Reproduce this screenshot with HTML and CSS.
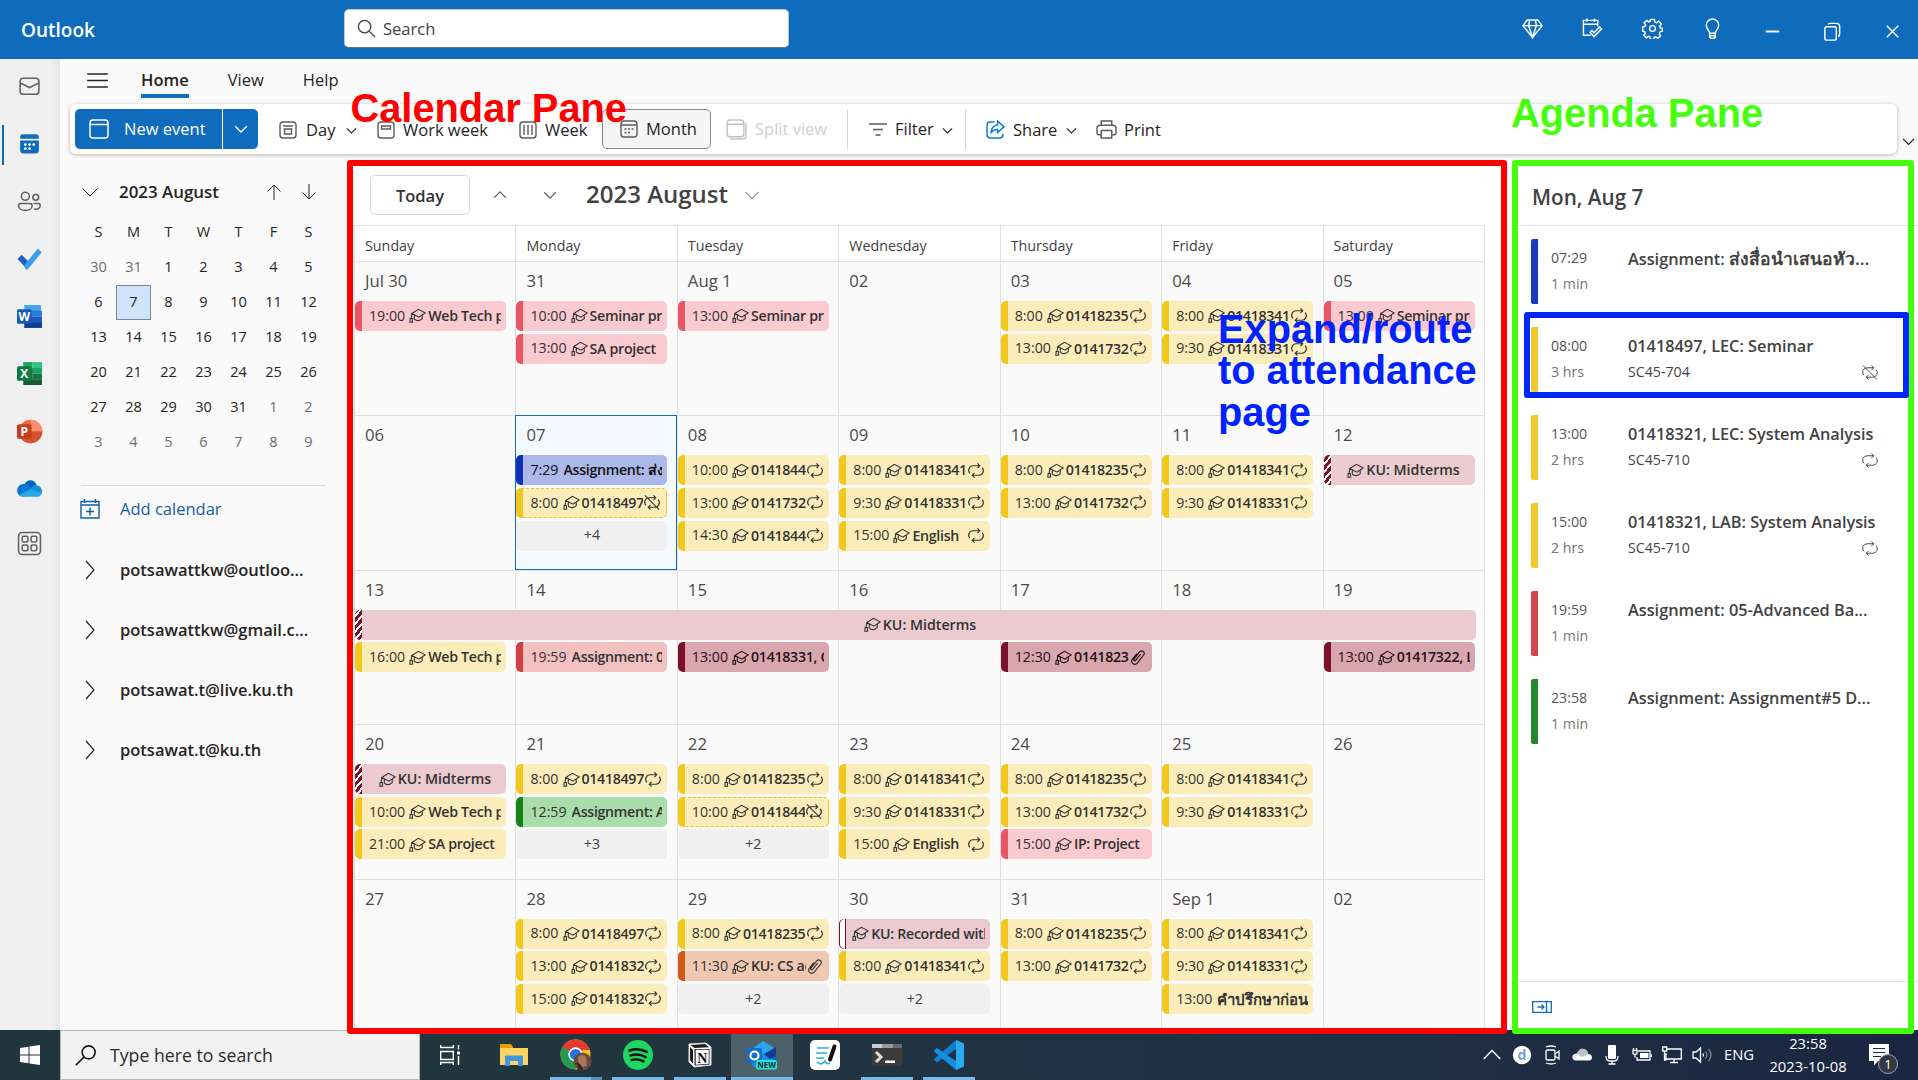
FILE: index.html
```html
<!DOCTYPE html>
<html lang="en">
<head>
<meta charset="utf-8">
<title>Outlook - Calendar</title>
<link rel="stylesheet" href="styles.css">
</head>
<body>
<svg class="defs" aria-hidden="true">
  <symbol id="cap" viewBox="0 0 18 18"><path d="M3 6.800 10 2.500l7 3.700-6.500 4.600zM5.600 8.500v4.300c2.400 2.400 6 2 8.400-.6V8.500M3 6.800l-.8 5.400M1.200 12.200h2.300l.3 4H.9z"/></symbol>
  <symbol id="rep" viewBox="0 0 18 18"><path d="M10.500 1.500 13 4l-2.500 2.500M13 4H6a4.700 4.700 0 0 0-3.400 8M7.500 16.500 5 14l2.500-2.500M5 14h7a4.700 4.700 0 0 0 3.400-8"/></symbol>
  <symbol id="norep" viewBox="0 0 18 18"><path d="M10.500 1.500 13 4l-2.500 2.500M13 4H6a4.700 4.700 0 0 0-3.400 8M7.500 16.500 5 14l2.500-2.500M5 14h7a4.700 4.700 0 0 0 3.400-8M1.500 1.500l15 15"/></symbol>
  <symbol id="clip" viewBox="0 0 18 18"><path d="M11.800 5.500 6.500 12c-1 1.200-2.700 0-1.800-1.300l6.300-7.800c2.200-2.200 5.800.5 4.200 3.200l-7 8.800c-3 3.200-7.600-.4-5.200-4L7.800 5"/></symbol>
  <symbol id="down" viewBox="0 0 18 18"><path d="M1.500 5.500 9 13l7.500-7.500"/></symbol>
  <symbol id="up" viewBox="0 0 18 18"><path d="M1.500 12.500 9 5l7.500 7.500"/></symbol>
  <symbol id="right" viewBox="0 0 18 18"><path d="M5 0l8 9-8 9"/></symbol>
</svg>

<header class="titlebar">
  <div class="brand">Outlook</div>
  <div class="searchbox"><svg viewBox="0 0 20 20"><circle cx="8" cy="8" r="6.500"/><path d="M13 13l6 6"/></svg><span>Search</span></div>
  <div class="title-actions">
    <span><svg viewBox="0 0 22 22"><path d="M5.500 2h11L21 8 11 20.500 1 8zM1 8h20M8 2 7 8l4 12.500L15 8l-1-6"/></svg></span>
    <span><svg viewBox="0 0 22 22"><path d="M9 18H1.500V2.500h15V9M1.500 6.500h15M5 .5v3.500M13 .5v3.500M8.500 15l4 4.500 8-8-2-2-6 6-2-2.300z"/></svg></span>
    <span><svg viewBox="0 0 22 22"><circle cx="11" cy="11" r="3"/><path d="M9 1.500h4l.5 2.800 1.700.7 2.400-1.600 2.600 2.800-1.600 2.300.7 1.800 2 .6v3l-2.400.7-.9 1.900 1.500 2.200-2.700 2.500-2.400-1.500-1.600.6-.6 2.200H9l-.6-2.500-1.700-.7-2.200 1.500-2.600-2.700 1.500-2.200-.7-1.700-2-.5V9.500l2.400-.7.700-1.700L2.200 5 5 2.500 7 4l1.500-.6z"/></svg></span>
    <span><svg viewBox="0 0 22 22"><path d="M8 16c0-3-3.500-4.500-3.500-8.500a6.500 6.500 0 0 1 13 0c0 4-3.500 5.500-3.500 8.500zM8 16v4l1.500 1.500h3L14 20v-4M8 18.500h6"/></svg></span>
    <span class="win"><svg viewBox="0 0 22 22"><path d="M4 11h14" stroke-width="2"/></svg></span>
    <span class="win"><svg viewBox="0 0 22 22"><rect x="3" y="6" width="12" height="14" rx="2"/><path d="M6.500 3.500Q7 2.500 8.500 2.500H15q3.500 0 3.500 3.500v7.500q0 2-1.500 3"/></svg></span>
    <span class="win"><svg viewBox="0 0 22 22"><path d="M5 5l12 12M17 5 5 17"/></svg></span>
  </div>
</header>

<div class="app">
  <nav class="rail">
    <span><svg viewBox="0 0 24 24" class="line"><rect x="3" y="4" width="18" height="15.500" rx="3"/><path d="M3 8.500l9 4.500 9-4.500"/></svg></span>
    <span class="active"><svg viewBox="0 0 24 24"><path fill="#0f6cbd" d="M6 3h12a3 3 0 0 1 3 3v1.500H3V6a3 3 0 0 1 3-3zM3 9h18v9.500a3 3 0 0 1-3 3H6a3 3 0 0 1-3-3z"/><g fill="#fff"><circle cx="8" cy="13" r="1.300"/><circle cx="12" cy="13" r="1.300"/><circle cx="16" cy="13" r="1.300"/><circle cx="8" cy="17" r="1.300"/><circle cx="12" cy="17" r="1.300"/></g></svg></span>
    <span><svg viewBox="0 0 24 24" class="line"><circle cx="8" cy="7" r="3.800"/><circle cx="18" cy="8" r="2.800"/><path d="M3.500 14h9q2 0 2 2c0 6-13 6-13 0q0-2 2-2zM16 14h4.500q1.800 0 1.800 1.800c0 3-3 4-6 3.400"/></svg></span>
    <span><svg viewBox="0 0 24 24"><path fill="#1f5fc4" d="M.5 12.500 4.500 8.500l6 6L9.500 22z"/><path fill="#3aa0ee" d="M6.500 19 20 2.500 23.700 6 10.500 22.300q-1 .8-2 0z"/></svg></span>
    <span><svg viewBox="0 0 24 24"><path fill="#41a5ee" d="M7 1h16v6H7z"/><path fill="#2b7cd3" d="M7 6.500h17v5.500H7z"/><path fill="#185abd" d="M7 12h17v6H7z"/><path fill="#103f91" d="M7 17.500h17V23H7z"/><rect y="5" width="14" height="14" rx="1.500" fill="#1857b8"/><text x="7" y="16" class="tile">W</text></svg></span>
    <span><svg viewBox="0 0 24 24"><path fill="#21a366" d="M6 1h9v11H6z"/><path fill="#33c481" d="M15 1h9v6h-9z"/><path fill="#21a366" d="M15 6.500h9V12h-9z"/><path fill="#107c41" d="M15 12h9v5.500h-9zM6 7h9v5H6z"/><path fill="#185c37" d="M6 12h9v5.500h9V23H6z"/><rect y="5" width="14" height="14" rx="1.500" fill="#107c41"/><text x="7" y="16" class="tile">X</text></svg></span>
    <span><svg viewBox="0 0 24 24"><circle cx="13" cy="12" r="11.300" fill="#ed6c47"/><path fill="#ff8f6b" d="M13 .7A11.300 11.300 0 0 1 24.300 12H13z"/><path fill="#d35230" d="M1.700 12h22.600A11.300 11.300 0 0 1 1.700 12z"/><rect y="5" width="14" height="14" rx="1.500" fill="#c43e1c"/><text x="7" y="16" class="tile">P</text></svg></span>
    <span><svg viewBox="0 0 24 24"><path fill="#0364b8" d="M7 8.500C9 2.500 17 2.500 19 9l-6 5z"/><path fill="#0078d4" d="M3 19a6 6 0 0 1 2-11c3-1 6 0 8 2l3 4-9 6z"/><path fill="#1490df" d="M13 13c2-4 5-5 6.500-4 5 1 5.500 7 3 9z"/><path fill="#28a8ea" d="M2 18.500 13 12.500l10.500 4.500q-1 3-4 3H5.500Q3 20 2 18.500z"/></svg></span>
    <span><svg viewBox="0 0 24 24" class="line"><rect x="1.500" y="1.500" width="21" height="21" rx="3.500"/><rect x="5" y="5" width="5.500" height="5.500" rx="1.500"/><rect x="13.500" y="5" width="5.500" height="5.500" rx="1.500"/><rect x="5" y="13.500" width="5.500" height="5.500" rx="1.500"/><rect x="13.500" y="13.500" width="5.500" height="5.500" rx="1.500"/></svg></span>
  </nav>

  <div class="content">
    <div class="tabs">
      <svg class="burger" viewBox="0 0 22 16"><path d="M0 1h22M0 8h22M0 15h22"/></svg>
      <span class="tab current">Home</span><span class="tab">View</span><span class="tab">Help</span>
    </div>

    <div class="ribbon-row">
      <div class="ribbon">
        <div class="new-event">
          <div class="new-main"><svg viewBox="0 0 20 20"><rect x="1" y="1" width="18" height="18" rx="3"/><path d="M1 5.500h18"/></svg><span>New event</span></div>
          <div class="new-more"><svg class="chev"><use href="#down"/></svg></div>
        </div>
        <div class="tool t-day"><svg viewBox="0 0 18 18"><rect x="1" y="1" width="16" height="16" rx="3"/><path d="M4 5h10M5.500 8h7v5h-7z"/></svg><span>Day</span><svg class="chev"><use href="#down"/></svg></div>
        <div class="tool t-work"><svg viewBox="0 0 18 18"><rect x="1" y="1" width="16" height="16" rx="3"/><path d="M4.500 5h9v3h-9z"/></svg><span>Work week</span></div>
        <div class="tool t-week"><svg viewBox="0 0 18 18"><rect x="1" y="1" width="16" height="16" rx="3"/><path d="M5 4v10M9 4v10M13 4v10"/></svg><span>Week</span></div>
        <div class="tool t-month"><svg viewBox="0 0 18 18"><rect x="1" y="1" width="16" height="16" rx="3"/><path d="M1 5h16M4.500 9h2M8 9h2M11.500 9h2M4.500 12.500h2M8 12.500h2"/></svg><span>Month</span></div>
        <div class="tool t-split"><svg viewBox="0 0 20 20"><rect x="1" y="1" width="16" height="16" rx="3"/><path d="M1 5h16M19 4v12q0 3-3 3H4"/></svg><span>Split view</span></div>
        <div class="tool t-filter"><svg viewBox="0 0 18 18"><path d="M0 4h18M4 9.500h10M6.500 15h5"/></svg><span>Filter</span><svg class="chev"><use href="#down"/></svg></div>
        <div class="tool t-share"><svg viewBox="0 0 18 18"><path d="M8 2H4Q1 2 1 5v9q0 3 3 3h9q3 0 3-3v-1M11 1l6 5.500-6 5.500V9C8 9 6 10 4.500 12.500 5 8 7.500 5 11 4.500z"/></svg><span>Share</span><svg class="chev"><use href="#down"/></svg></div>
        <div class="tool t-print"><svg viewBox="0 0 20 18"><path d="M5 5V1h10v4M5 14H3q-2 0-2-2V8q0-3 3-3h12q3 0 3 3v4q0 2-2 2h-2M5 10h10v7H5z"/></svg><span>Print</span></div>
      </div>
      <svg class="chev collapse"><use href="#down"/></svg>
    </div>

    <div class="workspace">
      <aside class="sidebar">
        <div class="mini-head"><svg class="big"><use href="#down"/></svg><b>2023 August</b><svg class="arrow" viewBox="0 0 16 16"><path d="M8 16V1M1.500 7.500 8 1l6.500 6.500"/></svg><svg class="arrow" viewBox="0 0 16 16"><path d="M8 0v15M1.500 8.500 8 15l6.500-6.500"/></svg></div>
        <div class="mini">
          <span>S</span><span>M</span><span>T</span><span>W</span><span>T</span><span>F</span><span>S</span>
          <i>30</i><i>31</i><span>1</span><span>2</span><span>3</span><span>4</span><span>5</span>
          <span>6</span><span class="sel">7</span><span>8</span><span>9</span><span>10</span><span>11</span><span>12</span>
          <span>13</span><span>14</span><span>15</span><span>16</span><span>17</span><span>18</span><span>19</span>
          <span>20</span><span>21</span><span>22</span><span>23</span><span>24</span><span>25</span><span>26</span>
          <span>27</span><span>28</span><span>29</span><span>30</span><span>31</span><i>1</i><i>2</i>
          <i>3</i><i>4</i><i>5</i><i>6</i><i>7</i><i>8</i><i>9</i>
        </div>
        <div class="add"><svg viewBox="0 0 20 20"><path d="M1 2.500h18V19H1zM1 6h18M4.500 0v4M15.500 0v4M10 8.500v8M6 12.500h8"/></svg><span>Add calendar</span></div>
        <div class="account"><svg><use href="#right"/></svg><b>potsawattkw@outloo...</b></div>
        <div class="account"><svg><use href="#right"/></svg><b>potsawattkw@gmail.c...</b></div>
        <div class="account"><svg><use href="#right"/></svg><b>potsawat.t@live.ku.th</b></div>
        <div class="account"><svg><use href="#right"/></svg><b>potsawat.t@ku.th</b></div>
      </aside>

      <main class="calendar">
        <div class="cal-head"><button>Today</button><svg class="step"><use href="#up"/></svg><svg class="step"><use href="#down"/></svg><h1>2023 August</h1><svg class="pick"><use href="#down"/></svg></div>
        <div class="weekdays"><span>Sunday</span><span>Monday</span><span>Tuesday</span><span>Wednesday</span><span>Thursday</span><span>Friday</span><span>Saturday</span></div>
        <div class="month">
          <div class="day"><p>Jul 30</p>
            <div class="ev pink"><time>19:00</time><svg><use href="#cap"/></svg><b>Web Tech project</b></div></div>
          <div class="day"><p>31</p>
            <div class="ev pink"><time>10:00</time><svg><use href="#cap"/></svg><b>Seminar project</b></div>
            <div class="ev pink"><time>13:00</time><svg><use href="#cap"/></svg><b>SA project</b></div></div>
          <div class="day"><p>Aug 1</p>
            <div class="ev pink"><time>13:00</time><svg><use href="#cap"/></svg><b>Seminar project</b></div></div>
          <div class="day"><p>02</p></div>
          <div class="day"><p>03</p>
            <div class="ev"><time>8:00</time><svg><use href="#cap"/></svg><b>01418235</b><svg class="end"><use href="#rep"/></svg></div>
            <div class="ev"><time>13:00</time><svg><use href="#cap"/></svg><b>0141732</b><svg class="end"><use href="#rep"/></svg></div></div>
          <div class="day"><p>04</p>
            <div class="ev"><time>8:00</time><svg><use href="#cap"/></svg><b>01418341</b><svg class="end"><use href="#rep"/></svg></div>
            <div class="ev"><time>9:30</time><svg><use href="#cap"/></svg><b>01418331</b><svg class="end"><use href="#rep"/></svg></div></div>
          <div class="day"><p>05</p>
            <div class="ev pink"><time>13:00</time><svg><use href="#cap"/></svg><b>Seminar project</b></div></div>

          <div class="day"><p>06</p></div>
          <div class="day today"><p>07</p>
            <div class="ev blue"><time>7:29</time><b>Assignment: ส่งสื่อ</b></div>
            <div class="ev dashed"><time>8:00</time><svg><use href="#cap"/></svg><b>01418497</b><svg class="end"><use href="#norep"/></svg></div>
            <div class="more">+4</div></div>
          <div class="day"><p>08</p>
            <div class="ev"><time>10:00</time><svg><use href="#cap"/></svg><b>0141844</b><svg class="end"><use href="#rep"/></svg></div>
            <div class="ev"><time>13:00</time><svg><use href="#cap"/></svg><b>0141732</b><svg class="end"><use href="#rep"/></svg></div>
            <div class="ev"><time>14:30</time><svg><use href="#cap"/></svg><b>0141844</b><svg class="end"><use href="#rep"/></svg></div></div>
          <div class="day"><p>09</p>
            <div class="ev"><time>8:00</time><svg><use href="#cap"/></svg><b>01418341</b><svg class="end"><use href="#rep"/></svg></div>
            <div class="ev"><time>9:30</time><svg><use href="#cap"/></svg><b>01418331</b><svg class="end"><use href="#rep"/></svg></div>
            <div class="ev"><time>15:00</time><svg><use href="#cap"/></svg><b>English</b><svg class="end"><use href="#rep"/></svg></div></div>
          <div class="day"><p>10</p>
            <div class="ev"><time>8:00</time><svg><use href="#cap"/></svg><b>01418235</b><svg class="end"><use href="#rep"/></svg></div>
            <div class="ev"><time>13:00</time><svg><use href="#cap"/></svg><b>0141732</b><svg class="end"><use href="#rep"/></svg></div></div>
          <div class="day"><p>11</p>
            <div class="ev"><time>8:00</time><svg><use href="#cap"/></svg><b>01418341</b><svg class="end"><use href="#rep"/></svg></div>
            <div class="ev"><time>9:30</time><svg><use href="#cap"/></svg><b>01418331</b><svg class="end"><use href="#rep"/></svg></div></div>
          <div class="day"><p>12</p>
            <div class="ev allday"><svg><use href="#cap"/></svg><b>KU: Midterms</b></div></div>

          <div class="day"><p>13</p>
            <div class="ev allday wide"><svg><use href="#cap"/></svg><b>KU: Midterms</b></div>
            <div class="ev"><time>16:00</time><svg><use href="#cap"/></svg><b>Web Tech project</b></div></div>
          <div class="day under"><p>14</p>
            <div class="ev red"><time>19:59</time><b>Assignment: 05</b></div></div>
          <div class="day under"><p>15</p>
            <div class="ev wine"><time>13:00</time><svg><use href="#cap"/></svg><b>01418331, Comp</b></div></div>
          <div class="day under"><p>16</p></div>
          <div class="day under"><p>17</p>
            <div class="ev wine"><time>12:30</time><svg><use href="#cap"/></svg><b>0141823</b><svg class="end"><use href="#clip"/></svg></div></div>
          <div class="day under"><p>18</p></div>
          <div class="day under"><p>19</p>
            <div class="ev wine"><time>13:00</time><svg><use href="#cap"/></svg><b>01417322, Lec</b></div></div>

          <div class="day"><p>20</p>
            <div class="ev allday"><svg><use href="#cap"/></svg><b>KU: Midterms</b></div>
            <div class="ev"><time>10:00</time><svg><use href="#cap"/></svg><b>Web Tech project</b></div>
            <div class="ev"><time>21:00</time><svg><use href="#cap"/></svg><b>SA project</b></div></div>
          <div class="day"><p>21</p>
            <div class="ev"><time>8:00</time><svg><use href="#cap"/></svg><b>01418497</b><svg class="end"><use href="#rep"/></svg></div>
            <div class="ev green"><time>12:59</time><b>Assignment: As</b></div>
            <div class="more">+3</div></div>
          <div class="day"><p>22</p>
            <div class="ev"><time>8:00</time><svg><use href="#cap"/></svg><b>01418235</b><svg class="end"><use href="#rep"/></svg></div>
            <div class="ev dashed"><time>10:00</time><svg><use href="#cap"/></svg><b>0141844</b><svg class="end"><use href="#norep"/></svg></div>
            <div class="more">+2</div></div>
          <div class="day"><p>23</p>
            <div class="ev"><time>8:00</time><svg><use href="#cap"/></svg><b>01418341</b><svg class="end"><use href="#rep"/></svg></div>
            <div class="ev"><time>9:30</time><svg><use href="#cap"/></svg><b>01418331</b><svg class="end"><use href="#rep"/></svg></div>
            <div class="ev"><time>15:00</time><svg><use href="#cap"/></svg><b>English</b><svg class="end"><use href="#rep"/></svg></div></div>
          <div class="day"><p>24</p>
            <div class="ev"><time>8:00</time><svg><use href="#cap"/></svg><b>01418235</b><svg class="end"><use href="#rep"/></svg></div>
            <div class="ev"><time>13:00</time><svg><use href="#cap"/></svg><b>0141732</b><svg class="end"><use href="#rep"/></svg></div>
            <div class="ev pink"><time>15:00</time><svg><use href="#cap"/></svg><b>IP: Project</b></div></div>
          <div class="day"><p>25</p>
            <div class="ev"><time>8:00</time><svg><use href="#cap"/></svg><b>01418341</b><svg class="end"><use href="#rep"/></svg></div>
            <div class="ev"><time>9:30</time><svg><use href="#cap"/></svg><b>01418331</b><svg class="end"><use href="#rep"/></svg></div></div>
          <div class="day"><p>26</p></div>

          <div class="day"><p>27</p></div>
          <div class="day"><p>28</p>
            <div class="ev"><time>8:00</time><svg><use href="#cap"/></svg><b>01418497</b><svg class="end"><use href="#rep"/></svg></div>
            <div class="ev"><time>13:00</time><svg><use href="#cap"/></svg><b>0141832</b><svg class="end"><use href="#rep"/></svg></div>
            <div class="ev"><time>15:00</time><svg><use href="#cap"/></svg><b>0141832</b><svg class="end"><use href="#rep"/></svg></div></div>
          <div class="day"><p>29</p>
            <div class="ev"><time>8:00</time><svg><use href="#cap"/></svg><b>01418235</b><svg class="end"><use href="#rep"/></svg></div>
            <div class="ev orange"><time>11:30</time><svg><use href="#cap"/></svg><b>KU: CS activity</b><svg class="end"><use href="#clip"/></svg></div>
            <div class="more">+2</div></div>
          <div class="day"><p>30</p>
            <div class="ev free"><svg><use href="#cap"/></svg><b>KU: Recorded with</b></div>
            <div class="ev"><time>8:00</time><svg><use href="#cap"/></svg><b>01418341</b><svg class="end"><use href="#rep"/></svg></div>
            <div class="more">+2</div></div>
          <div class="day"><p>31</p>
            <div class="ev"><time>8:00</time><svg><use href="#cap"/></svg><b>01418235</b><svg class="end"><use href="#rep"/></svg></div>
            <div class="ev"><time>13:00</time><svg><use href="#cap"/></svg><b>0141732</b><svg class="end"><use href="#rep"/></svg></div></div>
          <div class="day"><p>Sep 1</p>
            <div class="ev"><time>8:00</time><svg><use href="#cap"/></svg><b>01418341</b><svg class="end"><use href="#rep"/></svg></div>
            <div class="ev"><time>9:30</time><svg><use href="#cap"/></svg><b>01418331</b><svg class="end"><use href="#rep"/></svg></div>
            <div class="ev thai"><time>13:00</time><b>คำปรึกษาก่อน</b></div></div>
          <div class="day"><p>02</p></div>
        </div>
      </main>

      <aside class="agenda">
        <h2>Mon, Aug 7</h2>
        <div class="items">
          <div class="item blue"><div class="when">07:29<br><em>1 min</em></div><div class="what"><b>Assignment: <span class="th">ส่งสื่อนำเสนอหัว...</span></b></div></div>
          <div class="item"><div class="when">08:00<br><em>3 hrs</em></div><div class="what"><b>01418497, LEC: Seminar</b><div>SC45-704<svg><use href="#norep"/></svg></div></div></div>
          <div class="item"><div class="when">13:00<br><em>2 hrs</em></div><div class="what"><b>01418321, LEC: System Analysis</b><div>SC45-710<svg><use href="#rep"/></svg></div></div></div>
          <div class="item"><div class="when">15:00<br><em>2 hrs</em></div><div class="what"><b>01418321, LAB: System Analysis</b><div>SC45-710<svg><use href="#rep"/></svg></div></div></div>
          <div class="item red"><div class="when">19:59<br><em>1 min</em></div><div class="what"><b>Assignment: 05-Advanced Ba...</b></div></div>
          <div class="item green"><div class="when">23:58<br><em>1 min</em></div><div class="what"><b>Assignment: Assignment#5 D...</b></div></div>
        </div>
        <footer><svg viewBox="0 0 20 12"><path d="M.7.7h18.600v10.600H.7zM14.500.7v10.600M5.500 6h6.500M9.500 3.500 12 6 9.500 8.500"/></svg></footer>
      </aside>
    </div>
  </div>
</div>

<footer class="taskbar">
  <div class="start"><svg viewBox="0 0 20 20"><path fill="#fff" d="M0 3l8.500-1.300v7.800H0zM9.500 1.500 20 0v9.500H9.500zM0 10.500h8.500v7.800L0 17zM9.500 10.500H20V20L9.500 18.500z"/></svg></div>
  <div class="tsearch"><svg viewBox="0 0 20 20"><circle cx="13" cy="7" r="6.200"/><path d="M8.500 11.500.7 19.300"/></svg><span>Type here to search</span></div>
  <div class="apps">
    <span><svg viewBox="0 0 20 20" width="20" class="tray"><path d="M.7 0v2.500h12.600V0M.7 6.500h12.600v8H.7zM.7 20v-2.500h12.600V20M18.500 0v4.500M18.500 11v9"/><path d="M17 6.500h3v3h-3z" fill="#fff" stroke="none"/></svg></span>
    <span><svg viewBox="0 0 28 24" width="28"><path fill="#e0a100" d="M0 1h11l2 3v4H0z"/><path fill="#fdd462" d="M0 5h28v17H0z"/><path fill="#4096dc" d="M5 23V12.500h18V23h-5v-5h-8v5z"/></svg></span>
    <span class="run group"><svg viewBox="0 0 32 32" width="32"><circle cx="15.500" cy="15.500" r="15" fill="#fbc116"/><path fill="#e33b2e" d="M2.500 8A15 15 0 0 1 28.500 8L15.500 15.500z"/><path fill="#e33b2e" d="M2.500 8h26l1 3H15l-6 8z"/><path fill="#1f9d4d" d="M2.500 8a15 15 0 0 0 12.500 22.500l7-11z"/><circle cx="15.500" cy="15.500" r="7.200" fill="#fff"/><circle cx="15.500" cy="15.500" r="5.600" fill="#2a6fe0"/><circle cx="22.500" cy="22.500" r="9" fill="#6b4a3c"/><path d="M18 18q5-4 8 0l1 9-8 2z" fill="#a87558"/><path d="M15 24q3 0 3 6l5 1.500q-2-9-8-7.500z" fill="#2b2523"/></svg></span>
    <span class="run"><svg viewBox="0 0 30 30" width="30"><circle cx="15" cy="15" r="15" fill="#1ed760"/><path d="M6.500 10.500q9-3 17.500 1.500M7.500 15.500q8-2.500 15 1.500M8.500 20q6.500-1.800 12 1.400" fill="none" stroke="#111" stroke-width="2.400" stroke-linecap="round"/></svg></span>
    <span class="run"><svg viewBox="0 0 26 26" width="26"><path d="M2 2l17-1 5 4v18l-17 2-5-5z" fill="#fff" stroke="#ddd"/><path d="M3.500 3 18 2l4 3.200L7.500 6zM7.500 7h15v15.500l-15 1zM3 5l3 3v14l-3-4z" fill="#1d1d1d"/><path d="M8.700 7.800h13v14l-13 .9z" fill="#fff"/><text x="15.200" y="20.500" class="notion">N</text></svg></span>
    <span class="run focus"><svg viewBox="0 0 32 32" width="32"><path fill="#28a8ea" d="M6 10 17 2l13 8-9 9H6z"/><path fill="#0364b8" d="M15 18 30 9v14H15z"/><path fill="#1490df" d="M5 20l12-6 13 8v6H7z"/><path fill="#123b8f" d="M18 15l12-7v8l-6 4z"/><rect x="1" y="9" width="15" height="15" rx="2" fill="#0f6fd6"/><circle cx="8.500" cy="16.500" r="4" fill="none" stroke="#fff" stroke-width="2.200"/><rect x="10" y="21" width="21" height="9.500" rx="2" fill="#22e3df"/><text x="20.500" y="28.800" class="badge-new">NEW</text></svg></span>
    <span><svg viewBox="0 0 30 30" width="30"><rect width="30" height="30" rx="5" fill="#fff"/><path d="M7 8h12M6 13h11M6 18h8M7 22q4 4 8-1 1 4 5 2" fill="none" stroke="#2bb0d6" stroke-width="1.700"/><path d="M24.500 6.500 20 19.500" stroke="#111" stroke-width="4" stroke-linecap="round"/></svg></span>
    <span class="run"><svg viewBox="0 0 30 24" width="30"><rect y="1" width="30" height="22" rx="1.500" fill="#3b3b3b"/><path fill="#ccc" d="M0 1h10v4H0z"/><path fill="#999" d="M10 1h11v4H10z"/><path fill="#6b6b6b" d="M21 1h9v4h-9z"/><path d="M4 9l5 5-5 5" fill="none" stroke="#ddd" stroke-width="3"/><path fill="#fff" d="M13 17.500h10V20H13z"/></svg></span>
    <span class="run"><svg viewBox="0 0 30 30" width="30"><path fill="#0f7fd0" d="M22 0v9L3 22.500 0 20v-1z"/><path fill="#1390e0" d="M0 10.500 3 8l19 13v9L0 11.500z"/><path fill="#2aaaf2" d="M22 0l8 3.500v23L22 30z"/></svg></span>
  </div>
  <div class="systray">
    <svg viewBox="0 0 18 18"><use href="#up"/></svg>
    <svg viewBox="0 0 20 20"><circle cx="10" cy="10" r="9.200" fill="#fff" stroke="none"/><text x="10" y="15" class="dee">d</text></svg>
    <svg viewBox="0 0 20 20"><path d="M4 2q5-2 10 0M4 18q5 2 10 0"/><rect x="4" y="5" width="9" height="10" rx="1.500"/><path d="M13 9l4-3v8l-4-3"/></svg>
    <svg viewBox="0 0 20 20"><path d="M3 15.500Q-1 14 1 10q2-2 4-1.500Q8 2 13 4.500 16 6 16 9q4 0 4 3.500 0 3-3 3z" fill="#f4f6f8" stroke="none"/><path d="M5 8.500Q8 2 13 4.500 16 6 16 9l-6 3z" fill="#b9c0c8" stroke="none"/></svg>
    <svg viewBox="0 0 20 20"><rect x="6" y="0" width="8" height="14" rx="1" fill="#fff" stroke="none"/><path d="M4 11q0 5 4 5h4q4 0 4-5M10 16v3M6.500 19h7"/></svg>
    <svg viewBox="0 0 20 20"><path d="M6 6h12v9H5v-3M1 5.500h4v3q-2 2-4 0zM1.500 3v2M4.500 3v2M3 9.500v3M19.500 9v3"/><path d="M8 8h8.500v5H8z" fill="#fff" stroke="none"/></svg>
    <svg viewBox="0 0 20 20"><path d="M5 4h14.300v10H4V8M12 14v3.500M8 17.500h8M.7 2h4v4h-4zM2.500 6v9h2"/></svg>
    <svg viewBox="0 0 20 20"><path d="M1 7h3l4.500-4v14L4 13H1zM11 8.500q1 1.500 0 3"/><path d="M13.500 6.500q3 3.500 0 7M16.500 4q5 6 0 12" opacity=".4"/></svg>
    <span class="lang">ENG</span>
    <span class="clock">23:58<br>2023-10-08</span>
    <div class="notice"><svg viewBox="0 0 22 22"><path d="M0 0h20v17H9l-4 4.500V17H0z" fill="#fff" stroke="none"/><path d="M4 4.500h12M4 8.500h12M4 12.500h8" stroke="#1d2a40"/></svg><i>1</i></div>
  </div>
</footer>

<!-- Review mark-up drawn over the window -->
<div class="frame f-red"></div>
<div class="frame f-green"></div>
<div class="frame f-blue"></div>
<div class="note n-red">Calendar Pane</div>
<div class="note n-green">Agenda Pane</div>
<div class="note n-blue">Expand/route<br>to attendance<br>page</div>
</body>
</html>
```
FILE: styles.css
```css
* { box-sizing: border-box; }
body {
  margin: 0;
  width: 1918px;
  height: 1080px;
  overflow: hidden;
  position: relative;
  display: flex;
  flex-direction: column;
  background: #fafafa;
  color: #242424;
  font: 16.5px/1.3 "Open Sans", "Noto Sans", sans-serif;
}
.defs { position: absolute; width: 0; height: 0; }
svg { display: block; flex: none; fill: none; stroke: currentColor; }
b { font-weight: 600; }
i, em { font-style: normal; }
.chev { width: 11px; height: 11px; stroke-width: 1.8; }

/* Title bar */
.titlebar { height: 59px; flex: none; display: flex; background: #0f6cbd; color: #fff; }
.brand { width: 344px; padding-left: 21px; line-height: 60px; font-size: 19px; font-weight: 600; }
.searchbox { width: 445px; height: 39px; margin-top: 9px; padding-left: 12px; display: flex; align-items: center; gap: 7px; background: #fff; border: 1px solid #b8c6d4; border-bottom-color: #707070; border-radius: 5px; color: #424242; }
.searchbox svg { width: 19px; height: 19px; stroke-width: 1.4; }
.title-actions { margin-left: auto; margin-right: -4px; display: flex; }
.title-actions span { width: 60px; display: flex; justify-content: center; padding-top: 18px; }
.title-actions .win { padding-top: 21px; }
.title-actions svg { width: 21px; height: 21px; stroke-width: 1.5; }

/* App shell */
.app { flex: 1; min-height: 0; display: flex; }
.rail { width: 60px; flex: none; background: linear-gradient(90deg, #f0f0f0 50px, #e6e6e6); display: flex; flex-direction: column; }
.rail span { height: 57.5px; display: flex; align-items: center; justify-content: center; padding: 0 1px 3px 0; }
.rail span:last-child { height: 51px; }
.rail svg { width: 25px; height: 25px; stroke: none; overflow: visible; }
.rail .line { stroke: #616161; stroke-width: 1.5; }
.rail .active { position: relative; }
.rail .active::before { content: ""; position: absolute; left: 2px; top: 8px; width: 2px; height: 40px; background: #0f6cbd; }
.tile { font: 700 11.5px "Open Sans", sans-serif; fill: #fff; text-anchor: middle; }
.content { flex: 1; min-width: 0; display: flex; flex-direction: column; }

.tabs { height: 45px; flex: none; display: flex; padding-left: 27px; }
.burger { width: 21px; height: 15px; margin: 14px 33px 0 0; stroke-width: 1.5; }
.tab { height: 39px; line-height: 42px; margin-right: 39px; }
.current { font-weight: 600; border-bottom: 4px solid #0f6cbd; }

.ribbon-row { display: flex; align-items: center; height: 50px; flex: none; padding-left: 10px; }
.ribbon { width: 1827px; height: 50px; padding: 5px; display: flex; background: #fff; border-radius: 6px; box-shadow: 0 1px 4px rgba(0, 0, 0, .28); }
.collapse { width: 13px; height: 13px; margin: 24px 0 0 5px; stroke-width: 1.6; }
.new-event { width: 183px; display: flex; background: #0f6cbd; color: #fff; border-radius: 5px; margin-right: 13px; }
.new-main { width: 148px; padding-left: 14px; display: flex; align-items: center; gap: 15px; border-right: 1px solid #fff; }
.new-main svg { width: 20px; height: 20px; stroke-width: 1.5; }
.new-more { flex: 1; display: grid; place-items: center; }
.new-more .chev { width: 14px; height: 14px; }
.tool { display: flex; align-items: center; gap: 8px; height: 41px; padding-left: 8px; white-space: nowrap; }
.tool > svg:first-child { width: 18px; height: 18px; color: #5c5c5c; stroke-width: 1.4; }
.tool .chev { margin-top: 2px; margin-left: auto; }
.t-day { width: 86px; margin-right: 12px; gap: 9px; }
.t-work { width: 142px; }
.t-week { width: 91px; }
.t-month { width: 109px; height: 40px; padding-left: 17px; border: 1px solid #8a8a8a; border-radius: 5px; background: #f5f5f5; }
.t-split { width: 137px; height: 40px; padding-left: 15px; color: #d0d0d0; border-right: 1px solid #d6d6d6; }
.t-split > svg:first-child { width: 21px; height: 21px; color: #c4c4c4; }
.t-filter { width: 118px; height: 40px; padding: 0 12px 0 21px; border-right: 1px solid #d6d6d6; }
.t-share { width: 111px; padding-left: 20px; }
.t-share > svg:first-child { color: #0f7bd8; width: 19px; height: 19px; }
.t-print { padding-left: 19px; gap: 7px; }
.t-print > svg:first-child { width: 21px; height: 19px; }

.workspace { flex: 1; min-height: 0; display: flex; padding-top: 8px; }

/* Sidebar */
.sidebar { width: 294px; flex: none; padding-left: 21px; }
.mini-head { display: flex; align-items: center; height: 53px; padding-top: 7px; }
.mini-head b { width: 147px; font-size: 16.9px; }
.mini-head .big { width: 18px; height: 18px; margin-right: 20px; }
.arrow { width: 16px; height: 16px; margin-right: 19px; }
.mini { display: grid; grid-template-columns: repeat(7, 35px); grid-auto-rows: 35px; width: 245px; height: 271px; border-bottom: 1px solid #dcdcdc; font-size: 14.5px; }
.mini > * { display: grid; place-items: center; }
.mini i { color: #6e6e6e; }
.mini .sel { background: #cfe4fa; border: 1px solid #7a8590; }
.add { display: flex; align-items: center; gap: 20px; height: 55px; margin: -5px 0 4px -1px; color: #115ea3; }
.add svg { width: 20px; height: 22px; stroke-width: 1.4; }
.account { display: flex; align-items: center; gap: 20px; height: 60px; padding-left: 1px; }
.account svg { width: 18px; height: 20px; stroke-width: 1.2; margin-left: -1px; margin-right: 1px; }

/* Month view */
.calendar { width: 1154px; flex: none; background: #fff; overflow: hidden; color: #424242; }
.cal-head { height: 63px; display: flex; align-items: center; padding: 3px 0 0 16px; }
.cal-head button { width: 100px; height: 40px; margin-right: 23px; border: 1px solid #d6d6d6; border-radius: 5px; background: #fff; font: 600 16.5px "Open Sans", sans-serif; color: #333; }
.cal-head .step { width: 14px; height: 14px; margin-right: 36px; stroke-width: 1.5; color: #616161; }
.cal-head h1 { margin: -2px 14px 0 -7px; width: 144px; white-space: nowrap; font-size: 24px; letter-spacing: 0; font-weight: 600; color: #424242; }
.cal-head .pick { width: 16px; height: 16px; }
.weekdays { margin-right: 23px; display: grid; grid-template-columns: repeat(7, 1fr); border-top: 1px solid #e0e0e0; height: 36px; font-size: 14.3px; line-height: 40px; border-right: 1px solid #e0e0e0; }
.weekdays span { border-left: 1px solid #e0e0e0; padding-left: 10px; }
.month { margin-right: 23px; display: grid; grid-template-columns: repeat(7, minmax(0, 1fr)); grid-auto-rows: 154.4px; background: #fafafa; border-right: 1px solid #e0e0e0; }
.day { border-top: 1px solid #e0e0e0; border-left: 1px solid #e0e0e0; display: flex; flex-direction: column; gap: 2.6px; }
.day p { margin: 0; height: 36.4px; padding-left: 10px; line-height: 37px; font-size: 16.7px; color: #4a4a4a; }
.today { background: #f4f9fd; outline: 1px solid #0f6cbd; border-color: transparent; position: relative; outline-offset: -1px; }
.under p + .ev { margin-top: 32.6px; }
.ev, .more { width: 151px; height: 30px; flex: none; border-radius: 5px; font-size: 14.2px; }
.more { display: grid; place-items: center; background: #f0f0f0; }
.ev { display: flex; align-items: center; overflow: hidden; padding: 0 5px 0 7px; white-space: nowrap; background: linear-gradient(90deg, #f2c81c 7px, #fbedb9 7px); color: #333; }
.ev time { margin: 0 5px 0 7px; }
.ev time + svg { margin-left: -1px; }
.ev svg { width: 17px; height: 17px; margin-right: 2px; stroke-width: 1.2; }
.ev b { flex: 1; min-width: 0; overflow: hidden; line-height: 28px; letter-spacing: -.3px; }
.ev .end { width: 18px; height: 17px; margin-right: 0; }
.ev.pink { background: linear-gradient(90deg, #e95564 7px, #f9cacf 7px); }
.ev.blue { background: linear-gradient(90deg, #1030b8 7px, #acb8ea 7px); color: #111; }
.ev.red { background: linear-gradient(90deg, #d13f45 7px, #f2c0c0 7px); }
.ev.green { background: linear-gradient(90deg, #178217 7px, #a9dda9 7px); }
.ev.wine { background: linear-gradient(90deg, #7b1128 7px, #d9a6ae 7px); color: #1f1214; }
.ev.orange { background: linear-gradient(90deg, #ce5a1c 7px, #efc8b2 7px); }
.ev.dashed { border: 1px dashed #f2c81c; border-left: 0; }
.ev.thai b { font-size: 15px; letter-spacing: 0; }
.ev.allday { justify-content: center; padding-left: 14px; background: linear-gradient(90deg, transparent 7px, #ebcad0 7px), repeating-linear-gradient(-50deg, #7b1128 0 3px, #fff 3px 5px); }
.ev.allday b { flex: none; letter-spacing: 0; }
.ev.wide { width: 1121px; position: relative; z-index: 1; }
.ev.free { padding-left: 13px; background: linear-gradient(90deg, #fff 6px, #7b1128 6px 7px, #ebcad0 7px); box-shadow: inset 1px 0 #7b1128; }

/* Agenda */
.agenda { width: 402px; flex: none; margin-left: 8px; background: #fff; color: #424242; display: flex; flex-direction: column; }
.agenda h2 { margin: 0; height: 64px; padding: 7px 0 0 16px; line-height: 56px; font-size: 20.7px; font-weight: 600; color: #424242; border-bottom: 1px solid #e0e0e0; }
.items { flex: 1; padding: 13px 0 0 15px; }
.item { height: 65px; margin-bottom: 23px; display: flex; border-left: 7px solid #f2c82a; border-radius: 2px; padding: 6px 0 0 13px; line-height: 26px; }
.item.blue { border-color: #1a3abb; }
.item.red { border-color: #d6464c; }
.item.green { border-color: #24892a; }
.when { width: 77px; font-size: 14.2px; color: #555; }
.when em { color: #757575; }
.what { width: 251px; font-size: 14.2px; white-space: nowrap; }
.what b { display: block; font-size: 16.3px; line-height: 26px; height: 26px; }
.what .th { font-size: 17.5px; }
.what div { display: flex; justify-content: space-between; align-items: center; }
.what svg { width: 18px; height: 17px; }
.agenda footer { height: 49px; border-top: 1px solid #e0e0e0; padding: 19px 0 0 16px; color: #0f6cbd; }
.agenda footer svg { width: 20px; height: 12px; stroke-width: 1.3; }

/* Taskbar */
.taskbar { height: 50px; flex: none; display: flex; background: linear-gradient(90deg, #22363f 30%, #1f3044 65%, #1b2742); color: #fff; }
.start { width: 60px; display: grid; place-items: center; }
.start svg { width: 20px; height: 20px; stroke: none; }
.tsearch { width: 360px; background: #f2f2f2; border: 1px solid #b9b9b9; padding-left: 14px; display: flex; align-items: center; gap: 14px; color: #2b2b2b; font-size: 17.7px; }
.tsearch svg { width: 21px; height: 21px; stroke: #111; stroke-width: 1.5; }
.apps { display: flex; }
.apps span { width: 62.1px; display: grid; place-items: center; position: relative; }
.apps span:first-child { width: 63px; padding-right: 3px; }
.apps svg { stroke: none; }
.apps .tray { stroke: #fff; stroke-width: 1.4; }
.apps .run::after { content: ""; position: absolute; left: 5px; right: 5px; bottom: 0; height: 3px; background: #76b9ed; }
.apps .group::after { background: linear-gradient(90deg, #76b9ed 41px, #5a8fb8 41px); }
.apps .focus { background: #4d616b; }
.apps .focus::after { left: 0; right: 0; }
.notion { font: 700 14px "Liberation Serif", serif; fill: #111; text-anchor: middle; }
.badge-new { font: 700 8px "Open Sans", sans-serif; fill: #06292b; text-anchor: middle; }
.systray { margin-left: auto; display: flex; align-items: center; gap: 10px; padding-right: 19px; font-size: 14.8px; }
.systray > svg { width: 20px; height: 20px; stroke-width: 1.3; }
.dee { font: 700 14px "Open Sans", sans-serif; fill: #6fa5dc; stroke: none; text-anchor: middle; }
.lang { width: 30px; margin-left: 2px; }
.clock { width: 78px; margin-left: 5px; text-align: center; line-height: 23px; white-space: nowrap; }
.notice { width: 30px; margin-left: 12px; height: 22px; position: relative; }
.notice svg { width: 22px; height: 22px; }
.notice i { position: absolute; left: 9px; top: 10px; width: 20px; height: 20px; border-radius: 50%; background: #333942; border: 1px solid #9aa0a6; font-size: 13px; line-height: 18px; text-align: center; }

/* Review mark-up */
.frame { position: absolute; border: 6.5px solid; border-radius: 3px; }
.f-red { left: 347px; top: 160px; width: 1160px; height: 874px; border-color: #f00; }
.f-green { left: 1512px; top: 160px; width: 402px; height: 874px; border-color: #46ff0d; }
.f-blue { left: 1524px; top: 312px; width: 385px; height: 86px; border-color: #0026ff; }
.note { position: absolute; font: 700 39.8px/41.4px "Liberation Sans", Arial, sans-serif; white-space: nowrap; }
.n-red { left: 350.5px; top: 87.5px; color: #f00; }
.n-green { left: 1511px; top: 93px; color: #46ff0d; }
.n-blue { left: 1218px; top: 309px; color: #0022ff; }
```
